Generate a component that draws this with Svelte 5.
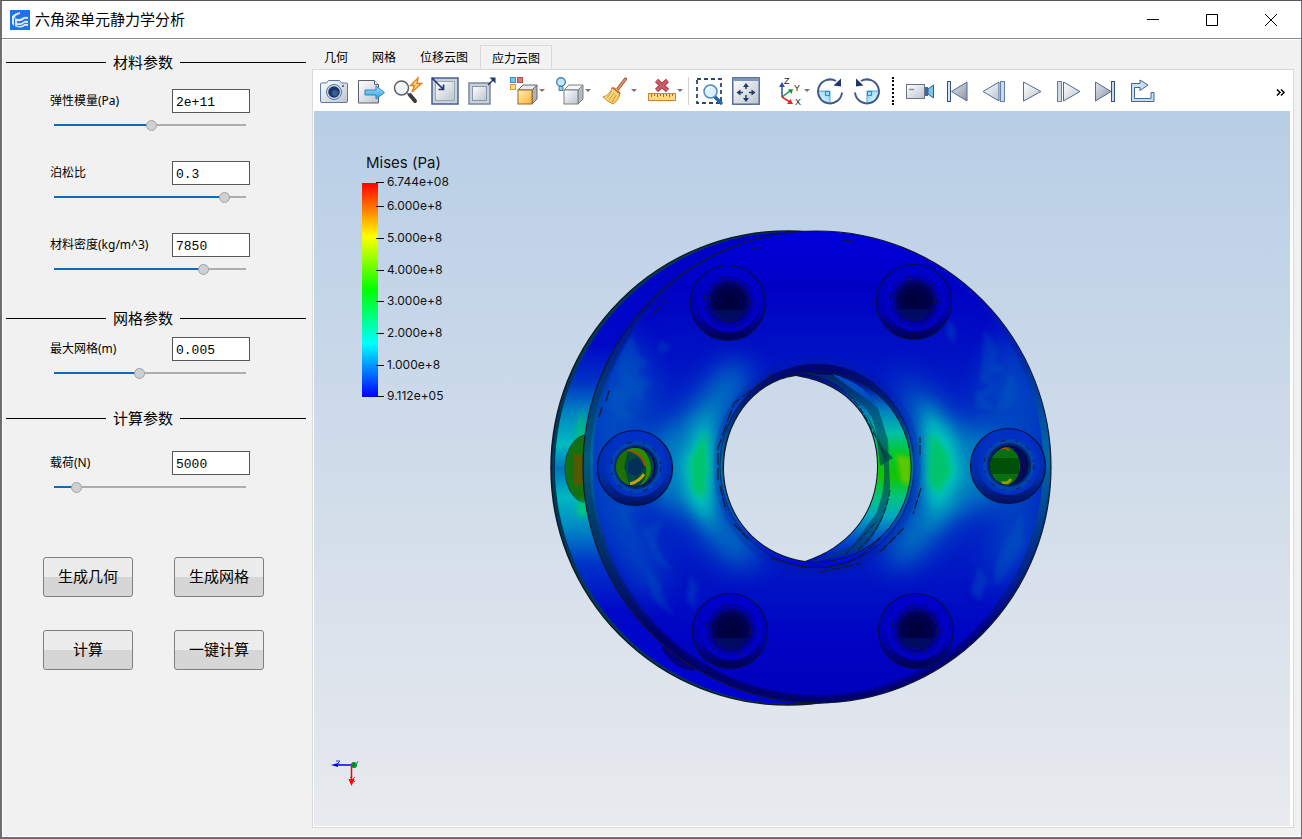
<script>
  let activeTab = $state('应力云图');
  const tabs = ['几何', '网格', '位移云图', '应力云图'];

  const sections = $state([
    {
      title: '材料参数',
      fields: [
        { id: 'modulus', label: '弹性模量(Pa)', text: '2e+11', pos: 508 },
        { id: 'poisson', label: '泊松比', text: '0.3', pos: 912 },
        { id: 'density', label: '材料密度(kg/m^3)', text: '7850', pos: 796 }
      ]
    },
    { title: '网格参数', fields: [{ id: 'mesh', label: '最大网格(m)', text: '0.005', pos: 442 }] },
    { title: '计算参数', fields: [{ id: 'load', label: '载荷(N)', text: '5000', pos: 94 }] }
  ]);

  const actions = ['生成几何', '生成网格', '计算', '一键计算'];

  const navy = '#33507e';
  const icons = {
    camera: `<path d="M1.5 6h5l2-2.500h11l2 2.500h5q1 0 1 1v17q0 1.500-1.500 1.500h-24Q.5 25.500.5 24V7q0-1 1-1z" fill="url(#gSteel)" stroke="#5a79ab"/><circle cx="14" cy="15" r="7.500" fill="#cfdcee" stroke="#5573a3"/><circle cx="14" cy="15" r="5.800" fill="#1b3768"/><circle cx="15" cy="16" r="3" fill="#3a6093"/><circle cx="23" cy="9" r="1" fill="#33507e"/>`,
    exportIt: `<path d="M1.500 3.500h16l4 4v18.500h-20z" fill="url(#gSteel)" stroke="#59606e"/><path d="M17.500 3.500v4h4" fill="#fff" stroke="#59606e"/><path d="M8 13h11v-4l8.500 6.500-8.500 6.500v-4H8z" fill="url(#gBlue)" stroke="#2b86c4"/>`,
    quickFind: `<path d="M13 16l3 3" stroke="#888" stroke-width="2"/><path d="M16 18l5 6" stroke="#3b3b40" stroke-width="4" stroke-linecap="round"/><circle cx="7.500" cy="11" r="7" fill="#f1f4f7" stroke="#5b6068" stroke-width="1.500"/><path d="M3 11a5 5 0 0 1 5-5" fill="none" stroke="#fff" stroke-width="2"/><path d="M24 1l-7.500 7.500h4L18 15l9.500-8.500h-4.500z" fill="#ffe08a" stroke="#e5801d" stroke-width="1.400"/>`,
    zoomIn: `<rect x="1" y="1" width="26" height="26" fill="#cbd1da" stroke="#46618e" stroke-width="1.500"/><rect x="4.500" y="4.500" width="19" height="19" fill="url(#gSteel)" stroke="#9aa5b5"/><path d="M1 1l11 11M12.500 7.500v5h-5" fill="none" stroke="#20396b" stroke-width="1.700"/>`,
    zoomOut: `<rect x="1" y="6" width="21" height="21" fill="#cbd1da" stroke="#7886a0" stroke-width="1.500"/><rect x="4.500" y="9.500" width="14" height="14" fill="url(#gSteel)" stroke="#8894a8"/><path d="M20 8l6-6" stroke="#20396b" stroke-width="1.500"/><path d="M27.500.500v6l-6-6z" fill="#20396b"/>`,
    parts: `<rect x=".5" y=".5" width="5" height="5" fill="#76c5ef" stroke="#3790c4"/><rect x="7.500" y=".5" width="5" height="5" fill="#d87b7b" stroke="#b34b4b"/><rect x=".5" y="7.500" width="5" height="5" fill="#ffdb8a" stroke="#e59a31"/><path d="M8 13l5-5h14l-5 5z" fill="#e6e8eb" stroke="#62666e"/><path d="M22 13l5-5v14l-5 5z" fill="#aeb2ba" stroke="#62666e"/><rect x="8" y="13" width="14" height="14" fill="url(#gGold)" stroke="#a4641a"/>`,
    light: `<circle cx="5" cy="5" r="4.300" fill="#c7e6f8" stroke="#3c87c0" stroke-width="1.400"/><path d="M3 9.500h4v4H3z" fill="#9bc5e2" stroke="#447fa8"/><path d="M8 13l5-5h14l-5 5z" fill="#f4f5f6" stroke="#7b7f86"/><path d="M22 13l5-5v14l-5 5z" fill="#b6bac1" stroke="#7b7f86"/><rect x="8" y="13" width="14" height="14" fill="url(#gSteel)" stroke="#7b7f86"/>`,
    broom: `<path d="M23.500 2L15 13" stroke="#8d4a2c" stroke-width="3" stroke-linecap="round"/><path d="M23.500 2L15 13" stroke="#ee9c66" stroke-width="1.400"/><path d="M10 11q5-1 8 5-1 7-7 11Q6 25 1 20q7-2 9-9z" fill="url(#gStraw)" stroke="#c98b22"/><path d="M10 14l-5 7M12 16l-5 7M14 18l-4 7" stroke="#d39a30" fill="none"/><path d="M10 10.500l8 6" stroke="#c65a30" stroke-width="1.500"/>`,
    ruler: `<path d="M8.500 3.500l11 10M19.500 3.500l-11 10" stroke="#a83a44" stroke-width="4.500"/><path d="M8.500 3.500l11 10M19.500 3.500l-11 10" stroke="#cf5c66" stroke-width="2.500"/><rect x=".5" y="16.500" width="27" height="7" fill="#ffd98a" stroke="#d2842b"/><path d="M3.500 17v3M6.500 17v2M9.500 17v3M12.500 17v2M15.500 17v3M18.500 17v2M21.500 17v3M24.500 17v2" stroke="#a86a1d"/>`,
    zoomBox: `<rect x="2" y="2" width="24" height="24" fill="none" stroke="#2c4573" stroke-width="1.800" stroke-dasharray="4 3"/><path d="M20 20l6 6" stroke="#2268a8" stroke-width="3.500" stroke-linecap="round"/><circle cx="15.500" cy="14.500" r="6.500" fill="#dceffb" stroke="#4f8cc0" stroke-width="1.500"/><path d="M11.500 14a4 4 0 0 1 4-4" stroke="#fff" stroke-width="1.600" fill="none"/>`,
    fit: `<rect x=".8" y=".8" width="26.400" height="26.400" fill="url(#gSteel)" stroke="#4b648e" stroke-width="1.400"/><path d="M1 1h26v3H1z" fill="#7c95ba"/><path d="M14 8v4M14 18v4M7 15.500h4M17 15.500h4" stroke="#20396b" stroke-width="1.500"/><path d="M14 6l3 4h-6zM14 25l3-4h-6zM4.500 15.500l4-3v6zM23.500 15.500l-4-3v6z" fill="#20396b"/>`,
    rotateCw: `<path d="M14 14v12.500A12 12 0 0 1 2 14z" fill="url(#gBlue2)" stroke="#4aa8dc"/><path d="M9.500 14.500h4v4h-4z" fill="#a6dbf8" stroke="#2d87c2"/><path d="M26 15.500A12 12 0 1 1 20 4" fill="none" stroke="#3f5b8d" stroke-width="2"/><path d="M25 1.500v8l-7.500-1z" fill="#1e376a"/>`,
    rotateCcw: `<g transform="translate(28 0) scale(-1 1)"><path d="M14 14v12.500A12 12 0 0 1 2 14z" fill="url(#gBlue2)" stroke="#4aa8dc"/><path d="M9.500 14.500h4v4h-4z" fill="#a6dbf8" stroke="#2d87c2"/><path d="M26 15.500A12 12 0 1 1 20 4" fill="none" stroke="#3f5b8d" stroke-width="2"/><path d="M25 1.500v8l-7.500-1z" fill="#1e376a"/></g>`,
    record: `<rect x=".5" y="7.500" width="18" height="14" fill="url(#gSteel)" stroke="#6b7382"/><path d="M3 12.500h5" stroke="#8a93a2" stroke-width="1.500"/><rect x="19" y="10" width="3" height="9" fill="#3c6ba0"/><path d="M22 12l5.500-4v13l-5.500-4z" fill="#7cc4ea" stroke="#2f5e95"/>`,
    first: `<rect x="4.500" y="4.500" width="3" height="20" fill="#dde3ec" stroke="${navy}"/><path d="M24 5v19L8.500 14.500z" fill="url(#gGrey)" stroke="#4f6b98"/>`,
    back: `<path d="M19 5v19L3 14.500z" fill="url(#gSteel)" stroke="#4f6b98"/><rect x="20.500" y="4.500" width="4" height="20" fill="#cdd9e8" stroke="#6580a8"/>`,
    play: `<path d="M6.500 5v19L24 14.500z" fill="url(#gSteel)" stroke="#4f6b98"/>`,
    forward: `<rect x="3.500" y="4.500" width="4" height="20" fill="#cdd9e8" stroke="#6580a8"/><path d="M9.500 5v19L26 14.500z" fill="url(#gSteel)" stroke="#4f6b98"/>`,
    last: `<path d="M4.500 5v19L20 14.500z" fill="url(#gGrey)" stroke="#4f6b98"/><rect x="20.500" y="4.500" width="3" height="20" fill="#cdd9e8" stroke="${navy}"/>`,
    loop: `<path d="M12 6.500H3.500v18h22.500v-9h-3v6H6.500V10.500H12v3l8-5.500-8-5z" fill="#c9dff0" stroke="#45648f"/>`,
    axes: `<path d="M4 20V9" stroke="#2c4fa0" stroke-width="1.500"/><path d="M4 5l3 5H1z" fill="#2c4fa0"/><path d="M4 20l8-6" stroke="#1d9140" stroke-width="1.500"/><path d="M15 12l-5 .5 3.500 4.500z" fill="#1d9140"/><path d="M4 20l8 5" stroke="#e02828" stroke-width="1.500"/><path d="M15 27h-6l3.500-5z" fill="#e02828"/><text x="6" y="7" font-family="Liberation Sans, sans-serif" font-size="9" fill="#222">Z</text><text x="16" y="14" font-family="Liberation Sans, sans-serif" font-size="9" fill="#222">Y</text><text x="17" y="28" font-family="Liberation Sans, sans-serif" font-size="9" fill="#222">X</text>`
  };

  const groups = [
    { name: 'file', items: [['camera', '截图'], ['exportIt', '导出'], ['quickFind', '快速查询'], ['zoomIn', '缩小'], ['zoomOut', '放大']] },
    { name: 'display', menu: true, items: [['parts', '部件'], ['light', '光照'], ['broom', '清除'], ['ruler', '测量']] },
    { name: 'view', items: [['zoomBox', '框选缩放'], ['fit', '适应窗口']] },
    { name: 'axis', menu: true, items: [['axes', '视角']] },
    { name: 'rotate', items: [['rotateCw', '顺时针旋转'], ['rotateCcw', '逆时针旋转']] },
    { name: 'playback', items: [['record', '录制'], ['first', '第一帧'], ['back', '上一帧'], ['play', '播放'], ['forward', '下一帧'], ['last', '最后一帧'], ['loop', '循环']] }
  ];

  const ticks = [
    ['6.744e+08', 0], ['6.000e+8', 24], ['5.000e+8', 56], ['4.000e+8', 88],
    ['3.000e+8', 119], ['2.000e+8', 151], ['1.000e+8', 183], ['9.112e+05', 214]
  ];

  const bolts = [
    { x: 728, y: 303 }, { x: 914, y: 302 }, { x: 730, y: 631 }, { x: 916, y: 631 },
    { x: 635, y: 468, hot: true }, { x: 1008, y: 466, hot: true }
  ];
</script>

<svg class="defs" width="0" height="0" aria-hidden="true">
  <defs>
    <linearGradient id="gSteel" x1="0" y1="0" x2="1" y2="1"><stop offset="0" stop-color="#fff" /><stop offset="1" stop-color="#bcc4d0" /></linearGradient>
    <linearGradient id="gGrey" x1="0" y1="0" x2="1" y2="1"><stop offset="0" stop-color="#e2e5ea" /><stop offset="1" stop-color="#8c95a3" /></linearGradient>
    <linearGradient id="gBlue" x1="0" y1="0" x2="0" y2="1"><stop offset="0" stop-color="#a5e0ff" /><stop offset="1" stop-color="#2d9fe0" /></linearGradient>
    <linearGradient id="gBlue2" x1="0" y1="1" x2="1" y2="0"><stop offset="0" stop-color="#fff" /><stop offset="1" stop-color="#7ccdf5" /></linearGradient>
    <linearGradient id="gGold" x1="0" y1="0" x2="1" y2="1"><stop offset="0" stop-color="#ffeeb8" /><stop offset="1" stop-color="#fbb42e" /></linearGradient>
    <linearGradient id="gStraw" x1="0" y1="0" x2="1" y2="1"><stop offset="0" stop-color="#fff0b8" /><stop offset="1" stop-color="#f6bd48" /></linearGradient>
  </defs>
</svg>

<div class="window">
  <header>
    <svg class="logo" width="20" height="20" viewBox="0 0 20 20" aria-hidden="true">
      <rect width="20" height="20" fill="#1a73e8" />
      <path d="M2 6q3-3 8-4v2Q6 5 5 7v1q4 2 7 0 3-2 6-1v2q-3-1-5 1-3 2-6 1v2q3 1 6-1 2-2 5-1v2q-3-1-5 1-3 2-6 1v1q3 1 6-1 2-2 5-1v2q-3-1-5 1-3 1-6 0-4-1-5-3z" fill="#d8e8fd" />
      <path d="M4.500 8v8" stroke="#1a73e8" />
    </svg>
    <h1>六角梁单元静力学分析</h1>
    <div class="controls">
      <button aria-label="最小化"><svg width="12" height="12" viewBox="0 0 12 12"><path d="M0 5.500h12" /></svg></button>
      <button aria-label="最大化"><svg width="12" height="12" viewBox="0 0 12 12"><path d="M.5.500h11v11H.5z" /></svg></button>
      <button aria-label="关闭"><svg width="12" height="12" viewBox="0 0 12 12"><path d="M0 0l12 12M12 0L0 12" /></svg></button>
    </div>
  </header>

  <main>
    <aside>
      {#each sections as section}
        <section>
          <h2>{section.title}</h2>
          <div class="fields">
            {#each section.fields as f}
              <div class="field">
                <label for={f.id}>{f.label}</label>
                <input id={f.id} type="text" bind:value={f.text} />
                <input type="range" aria-label={f.label} min="0" max="1000" bind:value={f.pos} style="--p: {f.pos / 10}%" />
              </div>
            {/each}
          </div>
        </section>
      {/each}
      <div class="actions">
        {#each actions as a}<button>{a}</button>{/each}
      </div>
    </aside>

    <div class="results">
      <nav>
        {#each tabs as tab}
          <button class:active={tab === activeTab} onclick={() => (activeTab = tab)}>{tab}</button>
        {/each}
      </nav>
      <div class="pane">
        <div class="toolbar">
          {#each groups as g}
            <div class="group {g.name}">
              {#each g.items as [icon, label]}
                <button class:menu={g.menu} aria-label={label}>
                  <svg width="28" height="28" viewBox="0 0 28 28" fill="none">{@html icons[icon]}</svg>
                  {#if g.menu}<i class="caret"></i>{/if}
                </button>
              {/each}
            </div>
          {/each}
          <button class="more" aria-label="更多"><svg width="9" height="7" viewBox="0 0 9 7"><path d="M1 .5l3 3-3 3M5 .5l3 3-3 3" fill="none" stroke="#000" stroke-width="1.500" /></svg></button>
        </div>

        <div class="viewport">
          <svg class="model" width="512" height="488" viewBox="546 225 512 488" role="img" aria-label="Mises">
            <defs>
              <filter id="b2" x="-50%" y="-50%" width="200%" height="200%"><feGaussianBlur stdDeviation="2" /></filter>
              <filter id="b3" x="-50%" y="-50%" width="200%" height="200%"><feGaussianBlur stdDeviation="3" /></filter>
              <filter id="b7" x="-50%" y="-50%" width="200%" height="200%"><feGaussianBlur stdDeviation="7" /></filter>
              <filter id="b14" x="-60%" y="-60%" width="220%" height="220%"><feGaussianBlur stdDeviation="14" /></filter>
              <linearGradient id="backFill" gradientUnits="userSpaceOnUse" x1="0" y1="231" x2="0" y2="706">
                <stop offset="0" stop-color="#0000c4" /><stop offset=".24" stop-color="#0008c8" /><stop offset=".32" stop-color="#0034c4" />
                <stop offset=".38" stop-color="#0082c0" /><stop offset=".45" stop-color="#00bcc0" /><stop offset=".5" stop-color="#0074c0" />
                <stop offset=".56" stop-color="#00b8c0" /><stop offset=".63" stop-color="#0084c4" /><stop offset=".7" stop-color="#0034c8" />
                <stop offset=".8" stop-color="#0008c8" /><stop offset="1" stop-color="#0000d0" />
              </linearGradient>
              <linearGradient id="edgeFill" gradientUnits="userSpaceOnUse" x1="0" y1="231" x2="0" y2="704">
                <stop offset="0" stop-color="#0000d8" /><stop offset=".15" stop-color="#0008a8" /><stop offset=".3" stop-color="#003080" />
                <stop offset=".48" stop-color="#005a78" /><stop offset=".65" stop-color="#003468" /><stop offset=".85" stop-color="#00006c" /><stop offset="1" stop-color="#000070" />
              </linearGradient>
              <linearGradient id="bevelFill" gradientUnits="userSpaceOnUse" x1="0" y1="231" x2="0" y2="704">
                <stop offset="0" stop-color="#0000e0" /><stop offset=".15" stop-color="#0008c0" /><stop offset=".3" stop-color="#0034a0" />
                <stop offset=".48" stop-color="#0068a8" /><stop offset=".65" stop-color="#003490" /><stop offset=".85" stop-color="#000090" /><stop offset="1" stop-color="#000090" />
              </linearGradient>
              <linearGradient id="faceFill" gradientUnits="userSpaceOnUse" x1="0" y1="231" x2="0" y2="704">
                <stop offset="0" stop-color="#0000dc" /><stop offset=".12" stop-color="#0000c4" /><stop offset=".36" stop-color="#0020c4" />
                <stop offset=".66" stop-color="#0020c4" /><stop offset=".85" stop-color="#0004c4" /><stop offset="1" stop-color="#0000bc" />
              </linearGradient>
              <linearGradient id="holeEdge" gradientUnits="userSpaceOnUse" x1="0" y1="362" x2="0" y2="570">
                <stop offset="0" stop-color="#000070" /><stop offset=".2" stop-color="#002078" /><stop offset=".5" stop-color="#00749c" />
                <stop offset=".75" stop-color="#0050b8" /><stop offset="1" stop-color="#0000d8" />
              </linearGradient>
              <linearGradient id="wallFill" gradientUnits="userSpaceOnUse" x1="0" y1="372" x2="0" y2="562">
                <stop offset="0" stop-color="#000078" /><stop offset=".1" stop-color="#0028b0" /><stop offset=".2" stop-color="#0080c0" />
                <stop offset=".32" stop-color="#00c0a8" /><stop offset=".42" stop-color="#00c830" /><stop offset=".55" stop-color="#14c400" />
                <stop offset=".66" stop-color="#00c480" /><stop offset=".76" stop-color="#00a8c0" /><stop offset=".88" stop-color="#0050c8" /><stop offset="1" stop-color="#0008d0" />
              </linearGradient>
              <linearGradient id="boltFill" x1="0" y1="0" x2="0" y2="1"><stop offset="0" stop-color="#0000d0" /><stop offset=".65" stop-color="#0000b0" /><stop offset="1" stop-color="#000050" /></linearGradient>
              <linearGradient id="boltHot" x1="0" y1="0" x2="0" y2="1"><stop offset="0" stop-color="#0030c8" /><stop offset=".65" stop-color="#002ca8" /><stop offset="1" stop-color="#001060" /></linearGradient>
              <radialGradient id="boreDark"><stop offset="0" stop-color="#000038" /><stop offset=".75" stop-color="#00004c" /><stop offset="1" stop-color="#000078" /></radialGradient>
              <clipPath id="faceClip"><ellipse cx="818" cy="464" rx="225" ry="231" /></clipPath>
              <clipPath id="frontClip"><ellipse cx="817" cy="467" rx="94" ry="95" /></clipPath>
              <clipPath id="boreL"><circle cx="635" cy="467" r="19" /></clipPath>
              <clipPath id="boreR"><circle cx="1009" cy="466" r="19" /></clipPath>
              <mask id="through" maskUnits="userSpaceOnUse" x="545" y="225" width="514" height="488">
                <rect x="545" y="225" width="514" height="488" fill="#fff" />
                <path d="M796 376C752 382 724 424 724 468C724 514 756 554 805 561C852 545 877 510 877 466C877 422 850 384 796 376z" fill="#000" />
              </mask>
            </defs>

            <g mask="url(#through)">
              <ellipse cx="788" cy="468" rx="237" ry="237" fill="#003a58" />
              <path d="M788 231H817L830 703L788 705z" fill="#0000c4" />
              <ellipse cx="791" cy="468" rx="236" ry="236" fill="url(#backFill)" />
              <ellipse cx="788" cy="468" rx="237" ry="237" fill="none" stroke="#10182c" stroke-width="1.500" />
              <path d="M583 408q-5 18-8 31l10-3z" fill="#00c070" filter="url(#b3)" />
              <ellipse cx="587" cy="469" rx="22" ry="34" fill="#147010" stroke="#004a30" />
              <path d="M574 454h12v31h-12q-2-16 0-31z" fill="#545800" />
              <path d="M577 502h12v14h-12z" fill="#00c878" filter="url(#b3)" />
              <path d="M662 648q10 19 30 22l15-8-24-18z" fill="#000080" stroke="#000048" />

              <ellipse cx="817" cy="467" rx="234" ry="236" fill="url(#edgeFill)" stroke="#10182c" stroke-width="1.200" />
              <ellipse cx="820" cy="465" rx="230" ry="232" fill="url(#bevelFill)" />
              <ellipse cx="818" cy="464" rx="225" ry="231" fill="url(#faceFill)" />

              <g clip-path="url(#faceClip)">
                <g filter="url(#b14)">
                  <path d="M585 400L625 330L655 390L640 440L630 500L665 590L640 590L590 500z" fill="#0054c0" opacity=".8" />
                  <path d="M1050 400L1010 325L985 380L975 440L1000 500L990 590L1030 560z" fill="#0050c0" opacity=".75" />
                  <path d="M650 440L690 412L730 362L750 370L720 430L718 505L760 560L735 565L690 515L650 500z" fill="#0084c0" />
                  <path d="M890 366L905 385L918 440L918 500L885 562L905 566L950 520L995 498L1000 440L958 425z" fill="#0084c0" />
                </g>
                <g filter="url(#b7)">
                  <path d="M692 420l24-14v130l-24-26z" fill="#0094c0" opacity=".8" />
                  <path d="M922 400l30 28 6 75-30 28z" fill="#0094c0" opacity=".8" />
                  <path d="M682 462L706 420L712 460L708 520L688 498z" fill="#00c8bc" />
                  <path d="M926 415L954 440L962 475L936 512L926 490z" fill="#00c8bc" />
                </g>
                <g filter="url(#b3)">
                  <path d="M690 462L705 431L708 468L704 500L692 490z" fill="#00c46c" />
                  <path d="M930 432L946 450L952 472L938 494L928 480z" fill="#00c46c" />
                </g>
                <g filter="url(#b2)" fill="#0060c0" opacity=".32">
                  <path d="M630 332l10 24 8 6-10 12 14 10-10 8 4 10-22-8-8-28zM612 385l18 10-4 14 12 8-20 4-10-12zM660 340l12 8-14 6zM642 530l22-12-8 20 4 16 14 18-18-10zM618 504l20 4-10 8 6 16-12-8zM646 566l14 18 6 20 10 14-24-20zM690 575l8 12-4 22-8-10z" />
                  <path d="M948 318l8 12-2 14-8-8zM985 330l14 20-4 12 10 8-16 6 8 10-18-4zM1010 372l8 14-6 20-14 6 4-20zM1008 538l14-26 2 30-18 34-12 10 2-24zM975 392l20-6-8 14 8 10-20-2zM978 566l10 14-8 22-10-10z" />
                </g>
              </g>

              <ellipse cx="817" cy="466" rx="104" ry="110" fill="#001890" opacity=".18" />
              <ellipse cx="817" cy="466" rx="97" ry="102" fill="url(#holeEdge)" stroke="#001048" stroke-width=".6" />
              <ellipse cx="817" cy="467" rx="94" ry="95" fill="url(#wallFill)" stroke="#101828" />
              <g clip-path="url(#frontClip)">
                <path d="M796 372Q848 378 872 418L880 446Q890 480 876 514L852 546L800 566L862 550Q888 520 890 486L888 440L878 408L840 376z" fill="#003c60" opacity=".6" />
                <path d="M826 374L858 398L870 420L882 446L893 458L880 466L877 440L864 408z" fill="#004450" opacity=".7" />
                <path d="M832 374Q862 382 876 404L862 396L848 386z" fill="#0050c0" />
                <path d="M896 454l14 4v28l-8-4z" fill="#60c800" filter="url(#b2)" />
                <path d="M808 374Q850 384 868 422L886 458M858 550q26-22 32-60M845 555l30-32" stroke="#101828" stroke-dasharray="7 2" fill="none" />
              </g>
              <path d="M796 376C752 382 724 424 724 468C724 514 756 554 805 561C852 545 877 510 877 466C877 422 850 384 796 376z" fill="none" stroke="#101828" stroke-width="2" />

              <g fill="none" stroke="#151a28" stroke-width="1.200">
                <path d="M653 315l13-15M609 391l-3 10M602 407l-3 10M752 249l12-2M842 240l14 2M718 480V448l16-45 40-30" stroke-dasharray="12 3" />
                <path d="M920 455v-18M921 488l-8 26M904 528l-26 26M820 572l42-9M800 566q50 8 80-28M720 486l6 24M734 524l14 15M771 558l34 10" stroke-dasharray="10 2" />
              </g>

              {#each bolts as b}
                <circle cx={b.x} cy={b.y} r="37.500" fill={b.hot ? 'url(#boltHot)' : 'url(#boltFill)'} stroke="#00103c" stroke-width="1.200" />
                <circle cx={b.x + 1} cy={b.y - 2} r="31" fill={b.hot ? '#0030c4' : '#0000c8'} />
                <circle cx={b.x + 1} cy={b.y - 1} r="26" fill={b.hot ? '#0044b0' : '#0000b0'} />
                <circle cx={b.x + 1} cy={b.y - 1} r="25" fill="none" stroke="#14182c" stroke-dasharray="5 11 2 9" />
                <circle cx={b.x + 1} cy={b.y - 1} r="22" fill={b.hot ? '#00286c' : '#000088'} />
                <circle cx={b.x + 1} cy={b.y - 1} r="19.500" fill="url(#boreDark)" stroke="#14182c" stroke-dasharray="4 3" />
                {#if !b.hot}
                  <path d="M{b.x - 16} {b.y + 7}h32q-4 11-15 12t-17-12z" fill="#001070" opacity=".6" />
                {/if}
              {/each}
              <g clip-path="url(#boreL)">
                <rect x="615" y="447" width="40" height="40" fill="#004a40" />
                <path d="M615 447h14l-5 20 6 20h-15z" fill="#207000" />
                <path d="M624 450q20 0 22 18t-16 20l12-3q14-12 6-28t-20-9z" fill="#2c8c00" />
                <path d="M628 450q15 4 17 16" fill="none" stroke="#a05000" stroke-width="2" />
                <path d="M630 484q10-3 14-10" fill="none" stroke="#c8a000" stroke-width="3" />
                <path d="M628 462l9-5 8 10-8 10-9-4z" fill="#003058" />
              </g>
              <g clip-path="url(#boreR)">
                <rect x="989" y="446" width="40" height="40" fill="#000c58" />
                <ellipse cx="1003" cy="466" rx="17" ry="20" fill="#087010" />
                <path d="M990 458h29v16h-29z" fill="#005008" />
                <path d="M1000 449q6-3 9 2" stroke="#a05000" stroke-width="2" fill="none" />
                <path d="M1002 482q5 3 9-3" stroke="#90a000" stroke-width="3" fill="none" />
              </g>
            </g>
          </svg>

          <div class="legend">
            <div class="caption">Mises (Pa)</div>
            <div class="scale">
              <div class="bar"></div>
              {#each ticks as [label, top]}
                <div class="tick" style="top: {top}px"><i></i>{label}</div>
              {/each}
            </div>
          </div>

          <svg class="triad" width="30" height="30" viewBox="0 0 30 30" aria-hidden="true">
            <path d="M22 7H7" stroke="#0000f0" stroke-width="1.500" /><path d="M0 7l7-2v4z" fill="#0000f0" />
            <path d="M20.500 8v13" stroke="#f00" stroke-width="1.500" /><path d="M20.500 28l-3-7h6z" fill="#f00" />
            <circle cx="23" cy="7" r="3" fill="#008c20" />
            <path d="M5 3h4l-3 3h3" fill="none" stroke="#2040e0" /><path d="M19 19l5 5M24 19l-5 5" stroke="#d02020" /><path d="M24 5l2 2M27 3l-3 6" stroke="#00b030" />
          </svg>
        </div>
      </div>
    </div>
  </main>
</div>

<style>
  :global(body) { margin: 0; background: #6d6e71; }
  .defs { position: absolute; }
  .window {
    box-sizing: border-box;
    min-height: 100vh;
    display: flex;
    flex-direction: column;
    border: 2px solid #6d6e71;
    border-top: 1px solid #55565a;
    border-right-width: 1px;
    font-family: "Noto Sans CJK SC", sans-serif;
    font-size: 12px;
    color: #000;
    background: #f1f1f1;
  }
  button { font: inherit; color: inherit; padding: 0; border: 0; background: none; }
  header {
    display: flex;
    align-items: center;
    height: 37px;
    padding-left: 8px;
    background: #fff;
    border-bottom: 1px solid #84888f;
  }
  h1 { flex: 1; margin: 0 0 0 5px; font-size: 15px; font-weight: 400; line-height: 20px; padding-bottom: 2px; }
  .controls { display: flex; padding-right: 1px; }
  .controls button { width: 59px; height: 36px; display: grid; place-items: center; }
  .controls path { fill: none; stroke: #000; }
  main {
    flex: 1;
    display: flex;
    border: solid #fff;
    border-width: 1px 0 1px 1px;
  }
  aside { width: 309px; flex: none; padding-top: 11px; box-sizing: border-box; }
  section { display: flex; flex-direction: column; gap: 8px; margin-bottom: 22px; }
  section:first-child { gap: 16px; margin-bottom: 26px; }
  section:nth-child(3) { gap: 22px; margin-bottom: 58px; }
  h2 {
    display: flex;
    align-items: center;
    gap: 7px;
    margin: 0 6px 0 3px;
    font-size: 15px;
    line-height: 22px;
    font-weight: 400;
  }
  h2::before, h2::after { content: ""; height: 1px; background: #000; }
  h2::before { width: 100px; }
  h2::after { flex: 1; }
  .fields { display: flex; flex-direction: column; gap: 24px; }
  .field { display: grid; grid-template-columns: 122px 78px; align-items: center; padding-left: 47px; }
  label { line-height: 20px; font-family: "Noto Sans", "Noto Sans CJK SC", sans-serif; }
  input[type="text"] {
    box-sizing: border-box;
    width: 78px;
    height: 24px;
    padding: 2px 3px 0;
    border: 1px solid #55565a;
    background: #fff;
    color: #000;
    font: 13px "Liberation Mono", monospace;
  }
  input[type="range"] {
    grid-column: 1 / -1;
    appearance: none;
    width: 192px;
    height: 24px;
    margin: 0 0 0 4px;
    background: linear-gradient(90deg, #0b6cbf var(--p), #adadad var(--p)) center / 100% 2px no-repeat;
  }
  input[type="range"]::-webkit-slider-thumb {
    appearance: none;
    box-sizing: border-box;
    width: 11px;
    height: 11px;
    border: 1px solid #a2a2a2;
    border-radius: 50%;
    background: #d0d0d0;
  }
  .actions { display: grid; grid-template-columns: 90px 90px; gap: 33px 41px; padding-left: 40px; }
  .actions button {
    height: 40px;
    padding-bottom: 3px;
    border: 1px solid #7f7f7f;
    border-radius: 3px;
    font-size: 15px;
    background: linear-gradient(#ececec 50%, #d6d6d6 50%);
  }
  .results { flex: 1; min-width: 0; display: flex; flex-direction: column; padding: 5px 7px 8px 0; }
  nav { display: flex; height: 24px; }
  nav button { padding: 0 12px; line-height: 24px; }
  nav .active { padding: 0 11px; border: 1px solid #dadada; border-bottom: 0; background: #f3f3f3; }
  .pane { flex: 1; display: flex; flex-direction: column; border: 1px solid #d9d9d9; padding: 0 3px 1px 1px; background: #fff; }
  .toolbar { display: flex; align-items: center; height: 41px; padding-left: 6px; }
  .group { display: flex; gap: 9px; }
  .group button { display: flex; align-items: center; }
  .group svg { display: block; overflow: visible; }
  .menu { width: 37px; }
  .caret { border: 3px solid transparent; border-top-color: #777; border-bottom: 0; margin-left: 1px; }
  .display { margin-left: 14px; }
  .view { margin-left: 3px; padding-left: 6px; border-left: 1px solid #d0d0d0; }
  .axis { margin-left: 18px; }
  .axis .menu { width: 38px; }
  .axis .caret { margin-left: -2px; }
  .rotate { padding-right: 11px; border-right: 2px dotted #000; }
  .playback { margin-left: 12px; }
  .more { margin-left: auto; padding-right: 5px; }
  .viewport {
    position: relative;
    flex: 1;
    display: grid;
    place-items: center;
    background: linear-gradient(#b8cee6, #e8eaee);
  }
  .model { display: block; }
  .legend { position: absolute; left: 48px; top: 42px; font-family: Inter, sans-serif; color: #111; }
  .caption { padding-left: 4px; font-size: 15px; line-height: 20px; }
  .scale { position: relative; margin-top: 10px; height: 214px; width: 90px; }
  .bar { width: 16px; height: 214px; background: linear-gradient(#f00, #ff0 25%, #0f0 50%, #0ff 75%, #00f); }
  .tick {
    position: absolute;
    left: 14px;
    display: flex;
    align-items: center;
    gap: 3px;
    height: 16px;
    margin-top: -9px;
    font-size: 12px;
    line-height: 16px;
  }
  .tick i { width: 8px; height: 1px; background: #111; }
  .triad { position: absolute; left: 17px; bottom: 38px; overflow: visible; }
</style>
